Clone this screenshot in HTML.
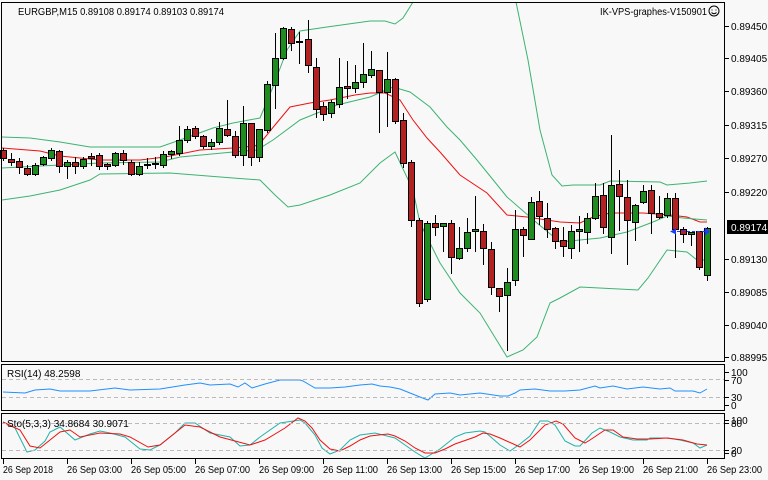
<!DOCTYPE html>
<html><head><meta charset="utf-8">
<style>
html,body{margin:0;padding:0;background:#f8f8f8;}
svg{display:block;font-family:"Liberation Sans","DejaVu Sans",sans-serif;font-size:10px;}
</style></head>
<body>
<svg id="s" width="768" height="480" xmlns="http://www.w3.org/2000/svg" shape-rendering="crispEdges">
<rect width="768" height="480" fill="#f8f8f8"/>
<g id="bands" fill="none" shape-rendering="auto"></g>
<g id="candles"></g>
<g id="ind" fill="none" shape-rendering="auto"></g>
<g stroke="#000" fill="none">
<rect x="1.5" y="2.5" width="723" height="359"/>
<rect x="1.5" y="364.5" width="723" height="46"/>
<rect x="1.5" y="413.5" width="723" height="45"/>
</g>
<g stroke="#bbb" stroke-dasharray="4,3">
<line x1="2" y1="379.5" x2="724" y2="379.5"/>
<line x1="2" y1="397.5" x2="724" y2="397.5"/>
<line x1="2" y1="423.5" x2="724" y2="423.5"/>
<line x1="2" y1="450.5" x2="724" y2="450.5"/>
</g>
<text x="18" y="15" fill="#000" textLength="206" lengthAdjust="spacingAndGlyphs">EURGBP,M15  0.89108 0.89174 0.89103 0.89174</text>
<text x="600" y="15" fill="#000" textLength="107" lengthAdjust="spacingAndGlyphs">IK-VPS-graphes-V150901</text>
<circle cx="714" cy="11" r="5" fill="none" stroke="#000" shape-rendering="auto"/>
<circle cx="712" cy="10" r="0.7" fill="#000"/><circle cx="716" cy="10" r="0.7" fill="#000"/>
<path d="M711.5 12.5 Q714 15 716.5 12.5" stroke="#000" fill="none" shape-rendering="auto"/>
<text x="7" y="377" fill="#000">RSI(14) 48.2598</text>
<text x="7" y="427" fill="#000">Sto(5,3,3) 34.8684 30.9071</text>
<g id="axis" fill="#000"></g>
<rect x="727" y="220" width="41" height="14" fill="#000"/>
<text x="731" y="231" fill="#fff">0.89174</text>
<line x1="672" y1="231.5" x2="707" y2="231.5" stroke="#1a3cff" stroke-dasharray="3,2"/>
<path d="M670 231.5 l6 -3 v6z" fill="#1a3cff"/>
<path d="M710 231.5 l-5 -4 v8z" fill="#1a3cff"/>
</svg>
<script>
var NS="http://www.w3.org/2000/svg";
function el(p,t,a){var e=document.createElementNS(NS,t);for(var k in a)e.setAttribute(k,a[k]);p.appendChild(e);return e;}
function pl(g,pts,c,w){el(g,"polyline",{points:pts.map(function(p){return p.join(",")}).join(" "),stroke:c,"stroke-width":w||1,fill:"none"});}
var B=document.getElementById("bands");
pl(B,[[2,137],[30,138],[60,142],[90,147],[160,147],[180,140],[213,128],[233,123],[260,118],[273,87],[287,50],[300,31],[327,27],[370,21],[385,21],[395,24],[403,18],[413,2]],"#3cb371");
pl(B,[[516,2],[528,60],[540,130],[552,175],[562,186],[573,185],[600,185],[610,181],[660,182],[667,185],[690,183],[707,181]],"#3cb371");
pl(B,[[2,148],[40,151],[60,156],[100,160],[140,160],[165,157],[200,150],[233,148],[255,146],[262,141],[275,125],[290,107],[310,103],[330,100],[355,95],[370,93],[385,93],[400,100],[413,120],[427,138],[440,152],[460,175],[487,193],[507,215],[527,217],[560,222],[580,223],[593,217],[610,213],[643,213],[670,215],[687,217],[700,222],[707,222]],"#ee1111");
pl(B,[[2,168],[40,166],[100,163],[160,162],[180,157],[233,152],[257,150],[273,140],[300,120],[337,105],[370,97],[393,87],[410,92],[430,107],[447,127],[460,140],[477,160],[507,197],[537,223],[560,242],[600,238],[627,232],[653,222],[667,216],[683,218],[707,220]],"#3cb371");
pl(B,[[2,200],[30,196],[60,190],[90,180],[100,174],[170,173],[233,178],[260,180],[275,195],[288,207],[300,205],[330,195],[360,183],[380,163],[395,152],[413,190],[420,223],[440,263],[460,293],[480,313],[507,357],[523,350],[537,337],[550,303],[560,298],[580,287],[638,290],[648,278],[667,250],[687,252],[697,260],[707,260]],"#3cb371");
var C=[
[3,150,158,148,160,'r'],[11,159,162,153,165,'r'],[19,161,167,158,173,'r'],[27,168,174,165,175,'r'],[35,165,174,163,175,'g'],[43,157,164,156,165,'g'],[51,150,158,148,160,'g'],[59,151,166,150,172,'r'],[67,162,166,160,178,'g'],[75,162,166,157,173,'r'],[83,159,166,157,168,'g'],[91,156,158,153,165,'r'],[99,155,166,153,169,'r'],[107,164,166,163,169,'r'],[115,153,165,152,166,'g'],[123,153,160,150,164,'r'],[131,162,174,160,175,'r'],[139,166,174,162,175,'g'],[147,164,165,158,168,'g'],[155,163,164,157,168,'g'],[163,154,165,151,167,'g'],[171,151,154,150,158,'g'],[179,140,153,126,155,'g'],[187,129,140,126,142,'g'],[195,128,136,126,138,'r'],[203,136,146,135,148,'r'],[211,142,146,139,149,'g'],[219,128,142,122,144,'g'],[227,129,135,100,136,'r'],[235,136,155,131,157,'r'],[243,123,155,106,165,'g'],[251,123,157,123,165,'r'],[259,129,157,129,161,'g'],[267,84,130,81,132,'g'],[275,58,85,33,108,'g'],[283,28,58,27,59,'g'],[291,29,43,27,50,'r'],[299,41,42,32,63,'g'],[308,39,65,20,72,'r'],[316,67,109,58,117,'r'],[323,106,114,102,120,'r'],[331,102,113,100,117,'g'],[339,87,104,58,107,'g'],[347,86,88,61,98,'r'],[355,82,88,65,92,'g'],[363,74,82,43,87,'g'],[371,69,75,51,77,'g'],[379,70,92,70,132,'r'],[387,79,92,52,126,'g'],[395,79,121,78,123,'r'],[403,120,163,113,167,'r'],[411,162,220,160,226,'r'],[419,220,303,218,306,'r'],[427,223,299,221,301,'g'],[435,223,227,215,235,'r'],[443,223,226,223,251,'g'],[451,223,257,220,273,'r'],[459,248,258,227,259,'g'],[467,232,248,218,251,'g'],[475,229,231,196,251,'g'],[483,231,248,224,264,'r'],[491,249,287,242,294,'r'],[499,288,296,288,311,'r'],[507,282,295,268,350,'g'],[515,229,280,210,285,'g'],[523,229,235,227,256,'r'],[531,202,239,197,239,'g'],[539,201,216,191,224,'r'],[547,218,229,203,237,'r'],[555,228,241,227,248,'r'],[563,240,246,227,256,'r'],[571,231,248,225,258,'g'],[579,229,231,216,251,'g'],[587,218,232,213,243,'g'],[595,196,218,183,219,'g'],[603,195,227,183,233,'r'],[611,185,237,135,253,'g'],[619,184,196,170,230,'r'],[627,197,220,180,264,'r'],[635,205,222,204,240,'g'],[643,191,202,185,203,'g'],[651,190,213,185,233,'r'],[659,213,217,196,218,'r'],[667,198,215,193,217,'g'],[675,198,229,193,257,'r'],[683,229,234,227,242,'r'],[691,232,234,232,245,'g'],[699,231,267,231,269,'r'],[707,228,275,227,280,'g']];
var G=document.getElementById("candles");
C.forEach(function(c){
 el(G,"line",{x1:c[0]+.5,x2:c[0]+.5,y1:c[3],y2:c[4]+1,stroke:"#000"});
 var h=Math.max(c[2]-c[1],1);
 el(G,"rect",{x:c[0]-2.5,y:c[1]+.5,width:6,height:h,fill:c[5]=='g'?'#1e8c1e':'#b22222',stroke:"#000"});
});
var I=document.getElementById("ind");
pl(I,[[3,392],[25,393],[35,390],[50,389],[60,391],[90,391],[115,388],[130,390],[160,389],[185,385],[200,383],[210,385],[230,384],[238,387],[245,383],[252,388],[265,384],[280,380],[290,380],[300,380],[303,381],[315,388],[330,388],[345,387],[360,385],[372,384],[380,386],[390,387],[400,389],[410,393],[420,397],[428,400],[435,394],[450,393],[460,395],[480,393],[500,396],[508,396],[515,393],[520,390],[535,389],[550,391],[565,391],[580,390],[595,386],[600,388],[613,386],[627,389],[643,387],[660,389],[670,388],[675,391],[693,391],[700,393],[707,389]],"#1e90ff");
pl(I,[[3,422],[15,428],[27,452],[35,450],[45,441],[50,432],[60,427],[75,440],[90,434],[100,431],[110,433],[125,437],[140,449],[150,450],[160,445],[175,433],[185,423],[195,423],[210,433],[230,437],[240,446],[250,445],[260,437],[280,423],[300,420],[305,423],[315,435],[322,448],[330,454],[340,450],[350,440],[360,435],[375,433],[395,438],[405,445],[415,452],[425,458],[430,455],[440,449],[455,437],[465,433],[480,431],[485,432],[492,438],[500,445],[510,451],[520,444],[530,436],[540,421],[548,421],[555,425],[565,441],[575,446],[580,446],[592,433],[600,428],[610,432],[620,437],[633,440],[647,440],[650,438],[667,438],[680,440],[693,443],[700,448],[707,445]],"#20b2aa");
pl(I,[[3,422],[20,430],[30,446],[40,448],[50,440],[60,432],[70,430],[80,437],[100,433],[120,434],[130,437],[148,447],[160,445],[175,433],[185,425],[200,427],[220,437],[250,445],[265,440],[285,428],[298,418],[305,421],[312,428],[320,440],[330,449],[340,451],[350,446],[360,440],[370,436],[388,434],[395,436],[405,441],[415,448],[425,453],[435,453],[445,449],[455,444],[475,437],[483,433],[490,434],[500,438],[520,447],[530,440],[545,425],[556,421],[563,424],[575,438],[585,443],[590,440],[605,430],[613,430],[623,437],[637,439],[650,439],[667,438],[683,440],[697,444],[707,445]],"#ee1111");
var A=document.getElementById("axis");
var L=[[26,"0.89450"],[58,"0.89405"],[91,"0.89360"],[125,"0.89315"],[158,"0.89270"],[192,"0.89220"],[259,"0.89130"],[292,"0.89085"],[325,"0.89040"],[357,"0.88995"]];
L.forEach(function(l){el(A,"line",{x1:725,x2:729,y1:l[0]+.5,y2:l[0]+.5,stroke:"#000"});el(A,"text",{x:731,y:l[0]+4}).textContent=l[1];});
[[372,"100"],[380,"70"],[397,"30"],[405,"0"],[420,"100"],[423,"80"],[450,"20"],[453,"0"]].forEach(function(l){el(A,"line",{x1:725,x2:729,y1:l[0]+.5,y2:l[0]+.5,stroke:"#000"});el(A,"text",{x:731,y:l[0]+4}).textContent=l[1];});
var T=["26 Sep 2018","26 Sep 03:00","26 Sep 05:00","26 Sep 07:00","26 Sep 09:00","26 Sep 11:00","26 Sep 13:00","26 Sep 15:00","26 Sep 17:00","26 Sep 19:00","26 Sep 21:00","26 Sep 23:00"];
T.forEach(function(t,i){var x=3+64*i;el(A,"line",{x1:x+.5,x2:x+.5,y1:459,y2:464,stroke:"#000"});var e=el(A,"text",{x:x,y:473,textLength:(i==0?50:55),lengthAdjust:"spacingAndGlyphs"});e.textContent=t;});
</script>
</body></html>
